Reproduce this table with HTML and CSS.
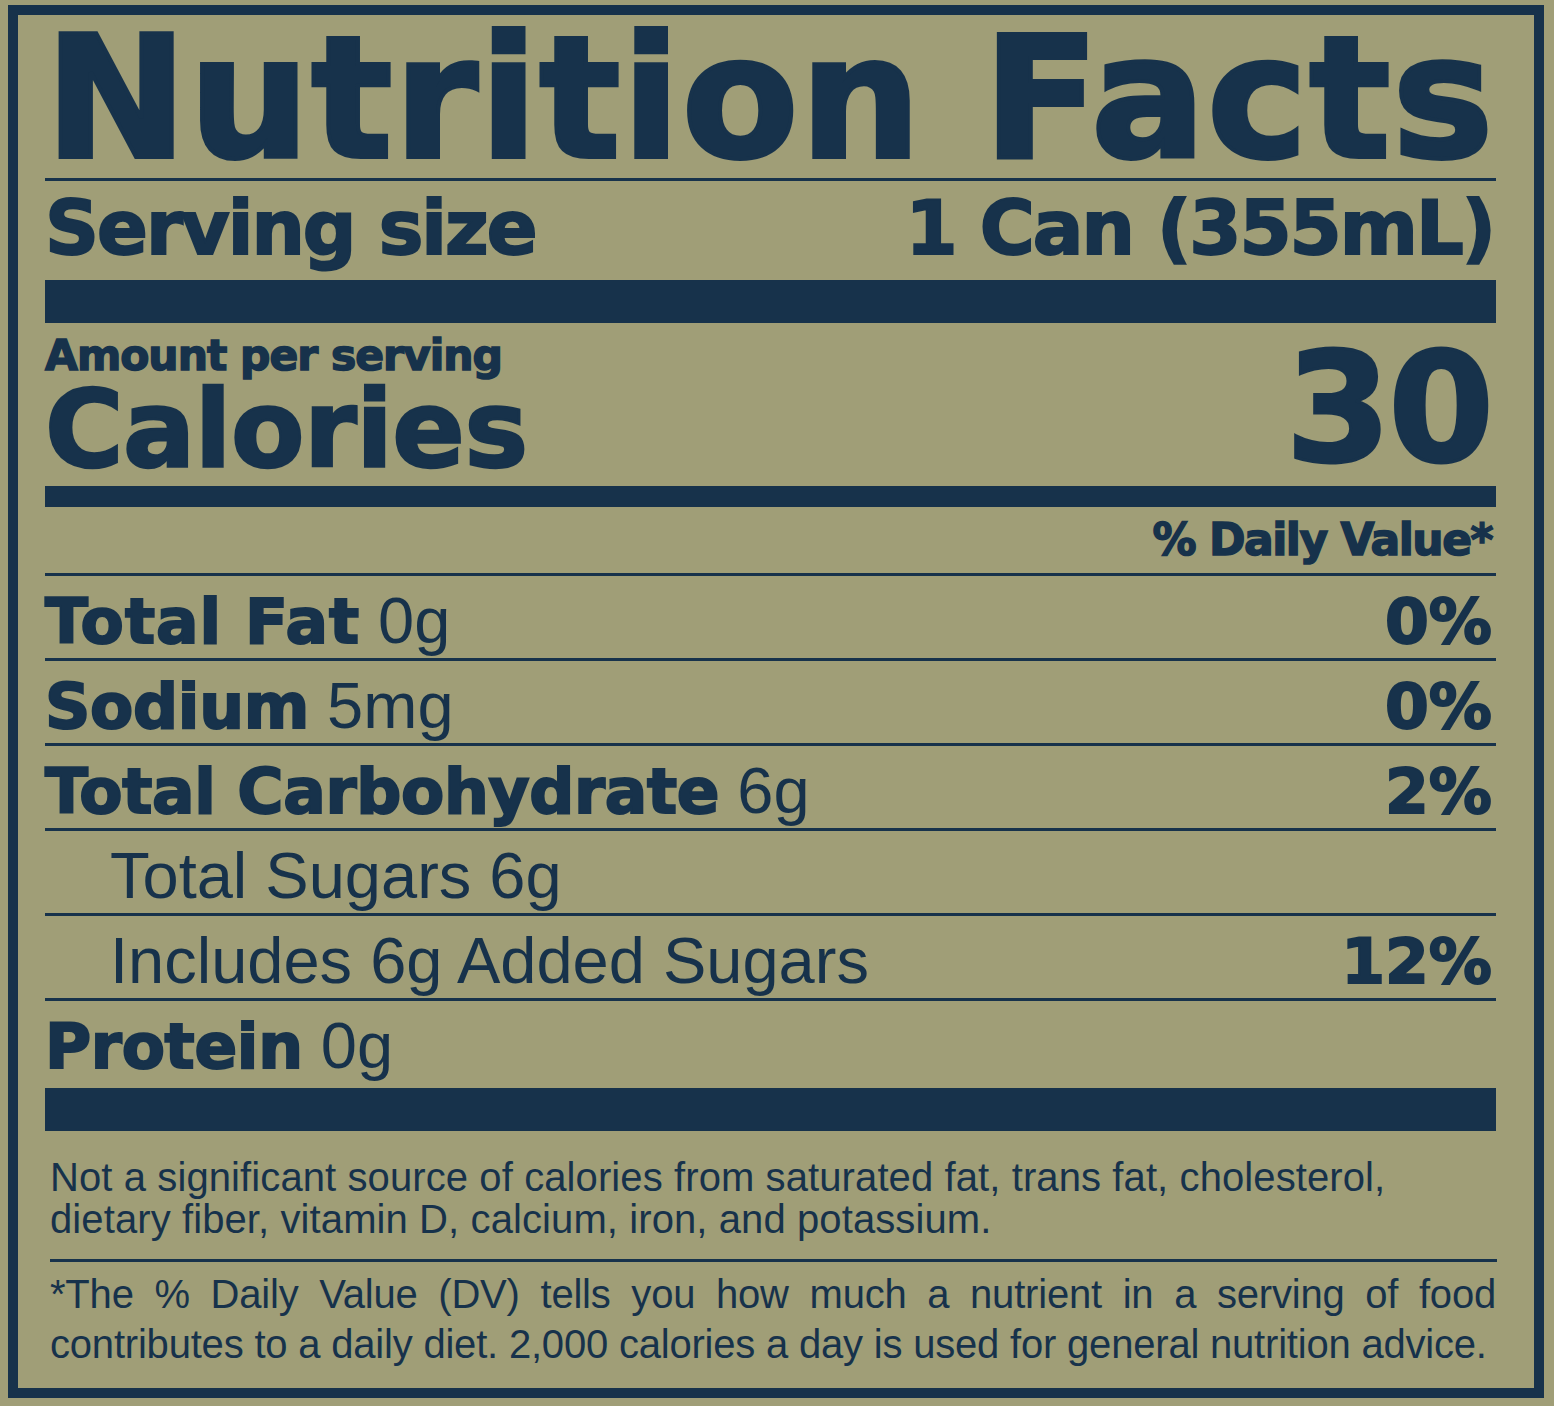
FILE: index.html
```html
<!DOCTYPE html>
<html lang="en">
<head>
<meta charset="utf-8">
<title>Nutrition Facts</title>
<link rel="stylesheet" href="styles.css">
</head>
<body>
<div class="label">
  <h1 class="title">Nutrition Facts</h1>
  <div class="serving">
    <span class="serving-label">Serving size</span>
    <span class="serving-value">1 Can (355mL)</span>
  </div>
  <div class="bar bar-thick"></div>
  <div class="calories">
    <div class="cal-left">
      <div class="amount">Amount per serving</div>
      <div class="cal-word">Calories</div>
    </div>
    <div class="cal-num">30</div>
  </div>
  <div class="bar bar-mid"></div>
  <div class="dv-head">% Daily Value*</div>
  <div class="row"><span class="name"><b class="heavy heavy-wide">Total Fat</b> 0g</span><b class="pct">0%</b></div>
  <div class="row"><span class="name"><b class="heavy">Sodium</b> 5mg</span><b class="pct">0%</b></div>
  <div class="row"><span class="name"><b class="heavy">Total Carbohydrate</b> 6g</span><b class="pct">2%</b></div>
  <div class="row row-sub"><span class="name">Total Sugars 6g</span></div>
  <div class="row row-sub"><span class="name">Includes 6g Added Sugars</span><b class="pct">12%</b></div>
  <div class="row row-last"><span class="name"><b class="heavy">Protein</b> 0g</span></div>
  <div class="bar bar-thick"></div>
  <p class="note">Not a significant source of calories from saturated fat, trans fat, cholesterol, dietary fiber, vitamin D, calcium, iron, and potassium.</p>
  <div class="rule"></div>
  <p class="dv-note">*The % Daily Value (DV) tells you how much a nutrient in a serving of food contributes to a daily diet. 2,000 calories a day is used for general nutrition advice.</p>
</div>
</body>
</html>
```

FILE: styles.css
```css
:root {
  --khaki: #a09e77;
  --navy: #17324b;
}

html, body {
  margin: 0;
  background: var(--khaki);
}

body {
  padding: 5px 0 0 8px;
  color: var(--navy);
  font-family: "Liberation Sans", Arial, sans-serif;
}

.label {
  box-sizing: border-box;
  width: 1536px;
  height: 1393px;
  border: 10px solid var(--navy);
  padding: 0 38px 0 27px;
}

.title,
.serving,
.amount,
.cal-word,
.cal-num,
.dv-head,
.heavy,
.pct {
  font-family: "DejaVu Sans", "Liberation Sans", sans-serif;
  font-weight: 700;
  -webkit-text-stroke: 1.5px var(--navy);
}

.title {
  margin: 0;
  height: 163px;
  font-size: 170px;
  line-height: 166px;
  letter-spacing: 1.5px;
  white-space: nowrap;
  border-bottom: 3px solid var(--navy);
  -webkit-text-stroke: 4px var(--navy);
}

.serving {
  display: flex;
  justify-content: space-between;
  height: 95px;
  margin-bottom: 4px;
  padding-right: 2px;
  font-size: 75px;
  line-height: 95px;
  letter-spacing: -2px;
  white-space: nowrap;
  -webkit-text-stroke: 2px var(--navy);
}

.bar {
  background: var(--navy);
}

.bar-thick {
  height: 43px;
}

.bar-mid {
  height: 21px;
}

.calories {
  display: flex;
  justify-content: space-between;
  align-items: flex-start;
  height: 163px;
}

.amount {
  padding-top: 9px;
  font-size: 42.5px;
  line-height: 48px;
  letter-spacing: -1px;
  white-space: nowrap;
}

.cal-word {
  font-size: 107px;
  line-height: 99px;
  letter-spacing: -0.5px;
  -webkit-text-stroke: 2.5px var(--navy);
}

.cal-num {
  margin-top: 20px;
  padding-right: 5px;
  font-size: 152px;
  line-height: 131px;
  letter-spacing: -3px;
  -webkit-text-stroke: 3px var(--navy);
}

.dv-head {
  height: 66px;
  padding-right: 4px;
  font-size: 44px;
  line-height: 66px;
  letter-spacing: -1.5px;
  text-align: right;
  border-bottom: 3px solid var(--navy);
}

.row {
  display: flex;
  justify-content: space-between;
  align-items: baseline;
  height: 74px;
  padding-top: 8px;
  font-size: 65px;
  line-height: 74px;
  border-bottom: 3px solid var(--navy);
  white-space: nowrap;
}

.name {
  font-weight: 400;
}

.heavy {
  font-size: 63px;
  letter-spacing: -0.3px;
  -webkit-text-stroke: 2px var(--navy);
}

.heavy-wide {
  letter-spacing: 1px;
}

.pct {
  padding-right: 4px;
  font-size: 63px;
  -webkit-text-stroke: 2px var(--navy);
}

.row-sub .name {
  padding-left: 65px;
}

.row-last {
  height: 79px;
  border-bottom: 0;
}

.note {
  margin: 25px 0 0;
  padding-left: 5px;
  font-size: 40px;
  line-height: 42px;
  letter-spacing: 0.1px;
}

.rule {
  height: 3px;
  margin: 19px 0 0 5px;
  width: 1447px;
  background: var(--navy);
}

.dv-note {
  margin: 7px 0 0;
  padding-left: 5px;
  width: 1446px;
  font-size: 40px;
  line-height: 50px;
  text-align: justify;
  letter-spacing: -0.2px;
}
```
